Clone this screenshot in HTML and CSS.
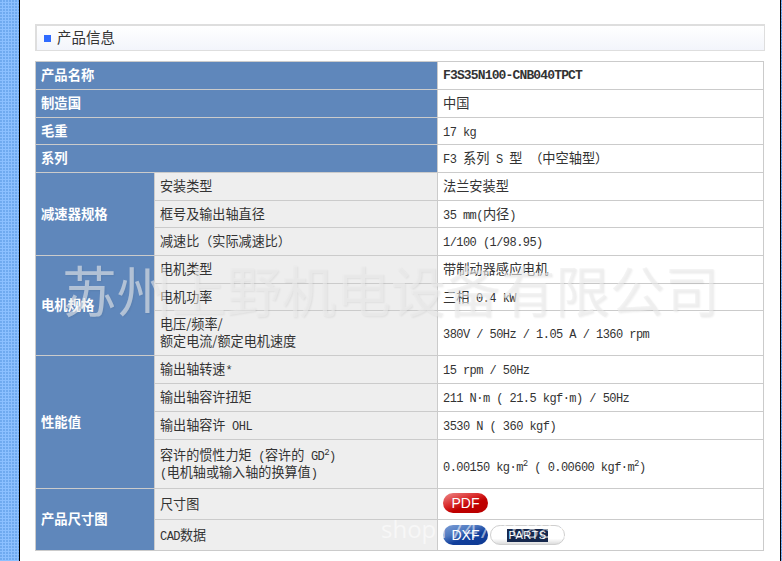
FILE: index.html
```html
<!DOCTYPE html>
<html lang="zh-CN">
<head>
<meta charset="utf-8">
<title>产品信息</title>
<link rel="stylesheet" href="styles.css">
</head>
<body>
<div class="page">
  <div class="stripe"></div>
  <main class="main">
    <h2 class="title"><span class="bullet"></span>产品信息</h2>
    <table class="spec">
      <colgroup><col class="c1"><col class="c2"><col class="c3"></colgroup>
      <tr class="r28"><th colspan="2">产品名称</th><td class="model">F3S35N100-CNB040TPCT</td></tr>
      <tr class="r28"><th colspan="2">制造国</th><td>中国</td></tr>
      <tr class="r27"><th colspan="2">毛重</th><td><span class="l">17 kg</span></td></tr>
      <tr class="r28"><th colspan="2">系列</th><td><span class="l">F3 </span>系列<span class="l"> S </span>型<span class="l"> </span>（中空轴型）</td></tr>
      <tr class="r28"><th rowspan="3">减速器规格</th><td class="sub">安装类型</td><td>法兰安装型</td></tr>
      <tr class="r27"><td class="sub">框号及输出轴直径</td><td><span class="l">35 mm(</span>内径<span class="l">)</span></td></tr>
      <tr class="r28"><td class="sub">减速比（实际减速比）</td><td><span class="l">1/100 (1/98.95)</span></td></tr>
      <tr class="r28"><th rowspan="3">电机规格</th><td class="sub">电机类型</td><td>带制动器感应电机</td></tr>
      <tr class="r27"><td class="sub">电机功率</td><td>三相<span class="l"> 0.4 kW</span></td></tr>
      <tr class="r45"><td class="sub">电压/频率/<br>额定电流/额定电机速度</td><td><span class="l">380V / 50Hz / 1.05 A / 1360 rpm</span></td></tr>
      <tr class="r28"><th rowspan="4">性能值</th><td class="sub">输出轴转速<span class="l">*</span></td><td><span class="l">15 rpm / 50Hz</span></td></tr>
      <tr class="r28"><td class="sub">输出轴容许扭矩</td><td><span class="l">211 N·m ( 21.5 kgf·m) / 50Hz</span></td></tr>
      <tr class="r28"><td class="sub">输出轴容许<span class="l"> OHL</span></td><td><span class="l">3530 N ( 360 kgf)</span></td></tr>
      <tr class="r49"><td class="sub">容许的惯性力矩<span class="l"> (</span>容许的<span class="l"> GD<sup>2</sup>)</span><br><span class="l">(</span>电机轴或输入轴的换算值<span class="l">)</span></td><td class="low"><span class="l">0.00150 kg·m<sup>2</sup> ( 0.00600 kgf·m<sup>2</sup>)</span></td></tr>
      <tr class="r31"><th rowspan="2">产品尺寸图</th><td class="sub">尺寸图</td><td><span class="pill pdf">PDF</span></td></tr>
      <tr class="r31"><td class="sub"><span class="l">CAD</span>数据</td><td class="btns">
        <div class="pills"><span class="pill dxf">DXF</span><span class="pill parts"><span class="parts-logo">PARTS</span></span></div>
      </td></tr>
    </table>
    <div class="mark">苏州上野机电设备有限公司</div>
    <div class="shop">shop1747.1688.com</div>
  </main>
  <div class="stripe stripe-r"></div>
</div>
</body>
</html>
```
FILE: styles.css
```css
html, body { margin: 0; padding: 0; background: #fff; }
body { height: 561px; overflow: hidden; }
.page { display: flex; height: 561px; overflow: hidden; }
.stripe {
  width: 19px;
  flex: none;
  background-color: #8cc0ff;
  background-image: radial-gradient(circle at 1px 1px, #6fa9ef 0.7px, transparent 1px);
  background-size: 3px 3px;
  border-right: 1px solid #000;
}
.stripe-r { width: 1px; border-right: 0; border-left: 1px solid #000; }
.main {
  position: relative;
  flex: 1;
  padding: 24px 15px 0;
  min-width: 0;
}
.title {
  display: flex;
  align-items: center;
  box-sizing: border-box;
  height: 27px;
  width: 730px;
  margin: 0 0 10px;
  padding: 0 0 2px 7px;
  border: 2px solid #dedede;
  border-width: 2px 1px 1px 2px;
  background: linear-gradient(#fff, #f3f5fb);
  font: 400 14.5px/1 "Noto Sans CJK SC", sans-serif;
  color: #333;
}
.bullet { width: 7px; height: 7px; margin: 2px 6px 0 0; background: #2f6bff; }
.spec {
  width: 729px;
  table-layout: fixed;
  border-collapse: collapse;
  font: 400 13.2px/17px "Noto Sans CJK SC", sans-serif;
  color: #333;
}
.c1 { width: 119px; }
.c2 { width: 283px; }
.spec th, .spec td { border: 1px solid #cbcbcb; padding: 0 0 2px 5px; text-align: left; }
.spec th { background: #5f87bb; color: #fff; font-weight: 700; font-size: 13.33px; }
.spec .sub { background: #eee; font-size: 13.1px; }
.spec .low { padding-top: 3px; padding-bottom: 1px; }
.spec .model { padding-bottom: 0; }
.spec .btns { padding-bottom: 0; }
.r27 { height: 27px; }
.r28 { height: 28px; }
.r31 { height: 31px; }
.r45 { height: 45px; }
.r49 { height: 49px; }
.l { font-family: "Liberation Mono", monospace; font-size: 12px; letter-spacing: -0.55px; line-height: 0; }
.l sup { font-size: 9px; line-height: 0; }
.model { font-family: "Liberation Mono", monospace; font-weight: 700; font-size: 13px; letter-spacing: -0.85px; }
.pills { display: flex; gap: 2px; }
.pill {
  box-sizing: border-box;
  display: flex;
  align-items: center;
  justify-content: center;
  width: 45px;
  height: 20px;
  border-radius: 10px;
  color: #fff;
  font: 400 14px/1 "Liberation Sans", sans-serif;
}
.pdf { background: linear-gradient(160deg, #ee8a8a 0, #d92a2a 40%, #c00000 60%, #b80000 100%); }
.dxf { background: linear-gradient(160deg, #7d9ed6 0, #4d78c0 35%, #123f9c 60%, #0e3a92 100%); }
.parts {
  width: 75px;
  background: linear-gradient(#fff 70%, #ddd);
  border: 1px solid #cfcfcf;
}
.parts-logo {
  width: 41px;
  height: 13px;
  overflow: hidden;
  background: #16284d;
  color: #fff;
  font: 400 11px/13px "Liberation Sans", sans-serif;
  letter-spacing: 0.5px;
  text-align: center;
}
.mark {
  position: absolute;
  left: 42px;
  top: 258px;
  white-space: nowrap;
  font: 400 54.8px/60px "Noto Sans CJK SC", sans-serif;
  color: rgba(236, 236, 236, 0.6);
  text-shadow: 1px 1px 2px rgba(0, 0, 0, 0.06);
}
.shop {
  position: absolute;
  left: 361px;
  top: 514px;
  white-space: nowrap;
  font: 400 24px/30px "Open Sans", sans-serif;
  color: rgba(255, 255, 255, 0.55);
}
```
